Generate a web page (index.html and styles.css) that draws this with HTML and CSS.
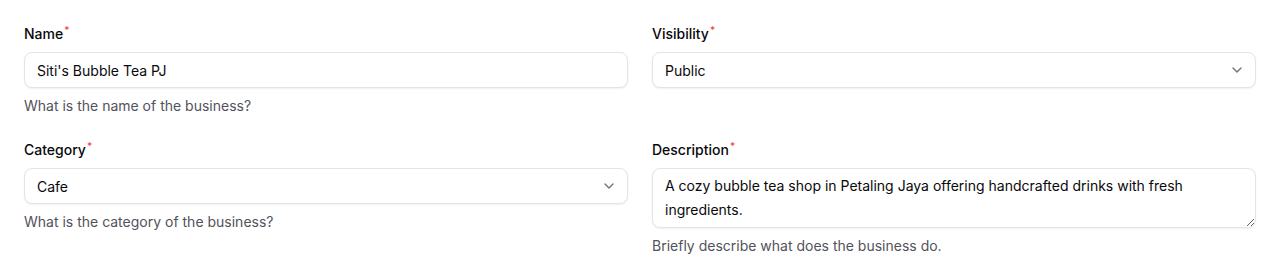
FILE: index.html
```html
<!DOCTYPE html>
<html lang="en">
<head>
  <meta charset="UTF-8">
  <meta name="viewport" content="width=device-width, initial-scale=1.0">
  <title>Business details</title>
  <link rel="stylesheet" href="styles.css">
</head>
<body>

  <!-- Business form -->
  <form class="business-form">
    <!-- Name -->
    <div class="field">
      <label class="field-label" for="name">Name<span class="required">*</span></label>
      <input class="field-input" type="text" id="name" value="Siti's Bubble Tea PJ">
      <p class="field-help">What is the name of the business?</p>
    </div>

    <!-- Visibility -->
    <div class="field">
      <label class="field-label" for="visibility">Visibility<span class="required">*</span></label>
      <div class="select-wrap">
        <select class="field-input field-select" id="visibility">
          <option>Public</option>
          <option>Private</option>
        </select>
        <svg class="chevron" width="16" height="16" viewBox="0 0 24 24" fill="none" stroke="currentColor" stroke-width="2" stroke-linecap="round" stroke-linejoin="round"><path d="m6 9 6 6 6-6"/></svg>
      </div>
    </div>

    <!-- Category -->
    <div class="field">
      <label class="field-label" for="category">Category<span class="required">*</span></label>
      <div class="select-wrap">
        <select class="field-input field-select" id="category">
          <option>Cafe</option>
          <option>Restaurant</option>
        </select>
        <svg class="chevron" width="16" height="16" viewBox="0 0 24 24" fill="none" stroke="currentColor" stroke-width="2" stroke-linecap="round" stroke-linejoin="round"><path d="m6 9 6 6 6-6"/></svg>
      </div>
      <p class="field-help">What is the category of the business?</p>
    </div>

    <!-- Description -->
    <div class="field">
      <label class="field-label" for="description">Description<span class="required">*</span></label>
      <textarea class="field-input field-textarea" id="description" rows="2">A cozy bubble tea shop in Petaling Jaya offering handcrafted drinks with fresh ingredients.</textarea>
      <p class="field-help">Briefly describe what does the business do.</p>
    </div>
  </form>

</body>
</html>
```

FILE: styles.css
```css
body {
  font-family: 'Inter', 'Noto Sans', sans-serif;
  background-color: #fff;
  color: #09090b;
  margin: 0;
  padding: 24px;
}

/* Two column form grid */
.business-form {
  display: grid;
  grid-template-columns: 1fr 1fr;
  column-gap: 24px;
  row-gap: 24px;
  align-items: start;
}

.field {
  display: flex;
  flex-direction: column;
  gap: 8px;
}

.field-label {
  font-size: 14px;
  line-height: 20px;
  height: 20px;
  font-weight: 500;
  color: #09090b;
}

.required {
  color: #ef4444;
  font-size: 10px;
  line-height: 0;
  vertical-align: 5px;
  margin-left: 1px;
}

/* Inputs, selects and textareas share the same look */
.field-input {
  box-sizing: border-box;
  width: 100%;
  height: 36px;
  margin: 0;
  padding: 0 12px;
  font-family: inherit;
  font-size: 14px;
  color: #09090b;
  background: #fff;
  border: 1px solid #e4e4e7;
  border-radius: 8px;
  box-shadow: 0 1px 2px rgba(0, 0, 0, 0.06);
  outline: none;
}

.select-wrap {
  position: relative;
  height: 36px;
}

.field-select {
  appearance: none;
  -webkit-appearance: none;
  display: block;
}

.chevron {
  position: absolute;
  right: 11px;
  top: 10px;
  color: #71717a;
  pointer-events: none;
}

.field-textarea {
  display: block;
  height: 60px;
  padding: 5px 12px;
  line-height: 24px;
  resize: vertical;
}

.field-help {
  margin: 0;
  font-size: 14px;
  line-height: 20px;
  color: #52525b;
}
```
